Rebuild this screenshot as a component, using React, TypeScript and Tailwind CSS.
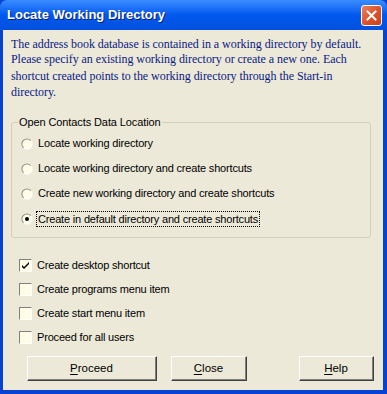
import React from "react";

const Radio = ({ checked }: { checked?: boolean }) => (
  <div className="relative w-[12px] h-[12px] shrink-0">
    <svg width="12" height="12" viewBox="0 0 12 12" className="absolute inset-0">
      <defs>
        <linearGradient id="rg" x1="0" y1="0" x2="1" y2="1">
          <stop offset="0" stopColor="#808080" />
          <stop offset="0.5" stopColor="#9a9a90" />
          <stop offset="0.51" stopColor="#ffffff" />
          <stop offset="1" stopColor="#ffffff" />
        </linearGradient>
      </defs>
      <circle cx="6" cy="6" r="5.6" fill="url(#rg)" />
      <circle cx="6" cy="6" r="4.6" fill="#fdfde6" />
      {checked && <circle cx="6" cy="6" r="2" fill="#000" />}
    </svg>
  </div>
);

const Check = ({ checked }: { checked?: boolean }) => (
  <div className="w-[13px] h-[13px] shrink-0 border-t border-l border-t-[#808080] border-l-[#808080] border-b border-r border-b-white border-r-white bg-[#fdfde6] flex items-center justify-center">
    {checked && (
      <svg width="9" height="9" viewBox="0 0 9 9">
        <path d="M1 4 L3 6 L8 1 L8 3 L3 8 L1 6 Z" fill="#000" />
      </svg>
    )}
  </div>
);

const Btn = ({ w, u, rest }: { w: string; u: string; rest: string }) => (
  <div
    className={`${w} h-[25px] bg-[#ECE9D8] border-t border-l border-t-white border-l-white border-b border-r border-b-[#404040] border-r-[#404040] flex`}
  >
    <div className="flex-1 border-b border-r border-b-[#808080] border-r-[#808080] flex items-center justify-center text-[11.5px] text-black">
      <span>
        <span className="underline underline-offset-2">{u}</span>
        {rest}
      </span>
    </div>
  </div>
);

export default function App() {
  const sans = "font-['Liberation_Sans',Arial,sans-serif]";
  return (
    <div className={`w-[387px] h-[394px] bg-[#0842D3] flex flex-col ${sans}`}>
      <div className="h-[30px] shrink-0 rounded-t-[7px] bg-gradient-to-b from-[#3A8CFF] via-[#0058EE] to-[#0450DD] flex items-center px-[7px]">
        <span className="text-white font-bold text-[13px] [text-shadow:1px_1px_0_#0a1f6e]">
          Locate Working Directory
        </span>
        <div className="ml-auto w-[21px] h-[21px] rounded-[3px] border border-white bg-gradient-to-br from-[#EC7F5E] via-[#E0532B] to-[#C8411C] flex items-center justify-center mr-[-2px]">
          <svg width="11" height="11" viewBox="0 0 11 11">
            <path d="M1.5 1.5 L9.5 9.5 M9.5 1.5 L1.5 9.5" stroke="#fff" strokeWidth="2" strokeLinecap="square" />
          </svg>
        </div>
      </div>
      <div className="flex-1 mx-[3px] mb-[4px] mr-[4px] bg-[#ECE9D8] flex flex-col px-[8px] pt-[6px]">
        <p className="font-['Liberation_Serif','Times_New_Roman',serif] text-[12px] tracking-[-0.05px] leading-[15.3px] text-[#0A1A84] pr-[2px] scale-y-[1.05] origin-top">
          The address book database is contained in a working directory by default. Please specify an existing working directory or create a new one. Each shortcut created points to the working directory through the Start-in directory.
        </p>
        <div className="relative mt-[25px] w-[360px] h-[116px] border border-[#D0D0BF] rounded-[3px] pt-[8px] px-[9px]">
          <span className="absolute -top-[8px] left-[6px] bg-[#ECE9D8] px-[1px] text-[11px] tracking-[-0.1px] text-black leading-[14px]">
            Open Contacts Data Location
          </span>
          {[
            "Locate working directory",
            "Locate working directory and create shortcuts",
            "Create new working directory and create shortcuts",
            "Create in default directory and create shortcuts",
          ].map((t, i) => (
            <div key={t} className="h-[25px] flex items-center gap-[4px] text-[11px] tracking-[-0.18px] text-black">
              <Radio checked={i === 3} />
              <span className={i === 3 ? "outline-1 outline-dotted outline-black px-[1px] leading-[14px]" : "px-[1px]"}>{t}</span>
            </div>
          ))}
        </div>
        <div className="mt-[15px] pl-[8px]">
          {[
            "Create desktop shortcut",
            "Create programs menu item",
            "Create start menu item",
            "Proceed for all users",
          ].map((t, i) => (
            <div key={t} className="h-[24px] flex items-center gap-[5px] text-[11px] tracking-[-0.18px] text-black">
              <Check checked={i === 0} />
              <span>{t}</span>
            </div>
          ))}
        </div>
        <div className="mt-[7px] flex pl-[16px]">
          <Btn w="w-[130px]" u="P" rest="roceed" />
          <div className="w-[14px]" />
          <Btn w="w-[76px]" u="C" rest="lose" />
          <div className="w-[52px]" />
          <Btn w="w-[75px]" u="H" rest="elp" />
        </div>
      </div>
    </div>
  );
}
